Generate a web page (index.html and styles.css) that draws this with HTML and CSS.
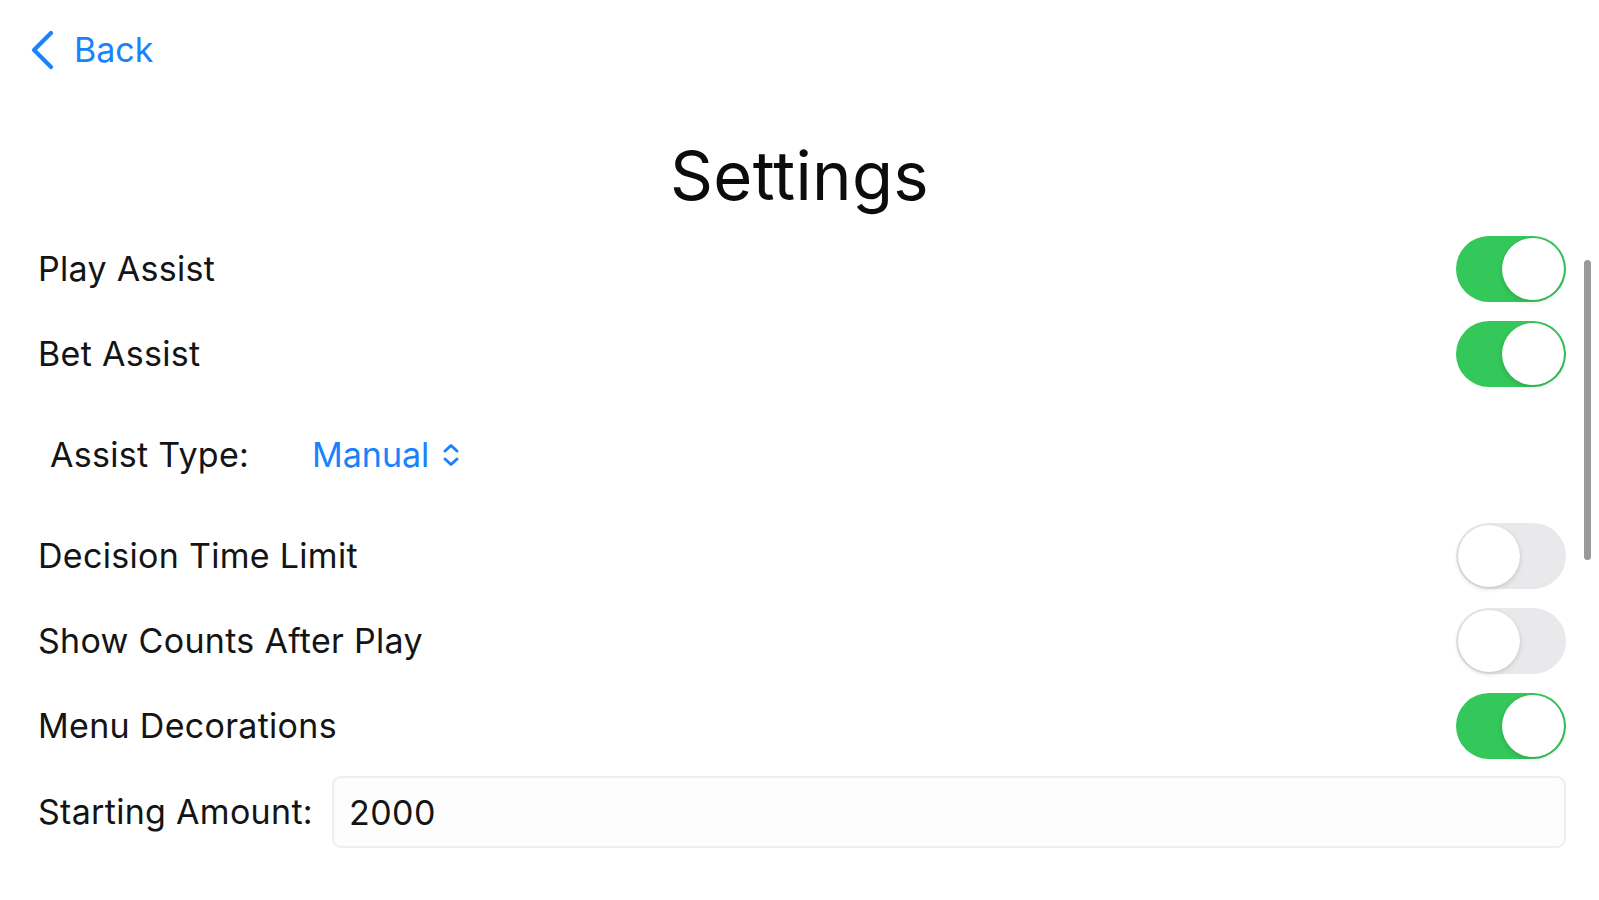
FILE: index.html
```html
<!DOCTYPE html>
<html>
<head>
<meta charset="utf-8">
<link rel="stylesheet" href="styles.css">
</head>
<body>
<div class="page">
  <header class="nav">
    <a class="back">
      <svg class="back-chevron" width="26" height="40" viewBox="0 0 26 40"><path d="M21 3 L4 20 L21 37" fill="none" stroke="#1a82fb" stroke-width="4.2" stroke-linecap="round" stroke-linejoin="round"/></svg>
      <span class="back-label">Back</span>
    </a>
  </header>
  <h1 class="title">Settings</h1>
  <div class="list">
    <div class="row">
      <span class="label">Play Assist</span>
      <span class="toggle on"><span class="knob"></span></span>
    </div>
    <div class="row">
      <span class="label">Bet Assist</span>
      <span class="toggle on"><span class="knob"></span></span>
    </div>
    <div class="row picker-row">
      <span class="label picker-label">Assist Type:</span>
      <span class="picker">Manual
        <svg class="updown" width="20" height="28" viewBox="0 0 20 28"><path d="M4 10 L10 4.5 L16 10 M4 18 L10 23.5 L16 18" fill="none" stroke="#1a82fb" stroke-width="3" stroke-linecap="round" stroke-linejoin="round"/></svg>
      </span>
    </div>
    <div class="row">
      <span class="label">Decision Time Limit</span>
      <span class="toggle"><span class="knob"></span></span>
    </div>
    <div class="row">
      <span class="label">Show Counts After Play</span>
      <span class="toggle"><span class="knob"></span></span>
    </div>
    <div class="row">
      <span class="label">Menu Decorations</span>
      <span class="toggle on"><span class="knob"></span></span>
    </div>
    <div class="field-row">
      <span class="label">Starting Amount:</span>
      <div class="field">2000</div>
    </div>
  </div>
  <div class="scrollbar"></div>
</div>
</body>
</html>
```
FILE: styles.css
```css
html, body {
  margin: 0;
  padding: 0;
  background: #ffffff;
}
body {
  font-family: Inter, "Noto Sans", "Liberation Sans", sans-serif;
  color: #141414;
  width: 1599px;
  height: 900px;
  overflow: hidden;
}
.page {
  position: relative;
  height: 900px;
}
.nav {
  height: 100px;
  display: flex;
  align-items: center;
  padding-left: 30px;
}
.back {
  display: flex;
  align-items: center;
  gap: 18px;
  color: #1a82fb;
  font-size: 34px;
  line-height: 40px;
}
.back-chevron {
  display: block;
}
.title {
  margin: 0;
  padding-top: 43px;
  padding-bottom: 17px;
  height: 66px;
  line-height: 66px;
  font-size: 67px;
  font-weight: 400;
  letter-spacing: 0.3px;
  text-align: center;
  color: #0c0c0c;
}
.list {
  padding: 0 33px 0 38px;
}
.row {
  height: 85px;
  display: flex;
  align-items: center;
  justify-content: space-between;
}
.label {
  font-size: 34px;
  line-height: 40px;
  letter-spacing: 0.3px;
  white-space: nowrap;
}
.picker-row {
  height: 117px;
  justify-content: flex-start;
  padding-left: 12px;
}
.picker-label {
  width: 262px;
}
.picker {
  display: flex;
  align-items: center;
  gap: 12px;
  font-size: 34px;
  line-height: 40px;
  color: #1a82fb;
}
.updown {
  display: block;
}
.toggle {
  position: relative;
  width: 110px;
  height: 66px;
  border-radius: 33px;
  background: #e9e9eb;
  flex: none;
}
.toggle.on {
  background: #34c759;
}
.knob {
  position: absolute;
  top: 2px;
  left: 2px;
  width: 62px;
  height: 62px;
  border-radius: 50%;
  background: #ffffff;
  box-shadow: 0 2px 5px rgba(0, 0, 0, 0.14), 0 0 1px rgba(0, 0, 0, 0.1);
}
.toggle.on .knob {
  left: 46px;
}
.field-row {
  margin-top: 8px;
  display: flex;
  align-items: center;
  gap: 19px;
}
.field {
  flex: 1;
  height: 72px;
  box-sizing: border-box;
  border: 2px solid #eeeeee;
  border-radius: 9px;
  background: #fdfdfd;
  padding-left: 15px;
  display: flex;
  align-items: center;
  font-size: 34px;
  letter-spacing: 0.5px;
  color: #141414;
}
.scrollbar {
  position: absolute;
  left: 1584px;
  top: 260px;
  width: 7px;
  height: 300px;
  border-radius: 4px;
  background: #9a9a9a;
}
```
